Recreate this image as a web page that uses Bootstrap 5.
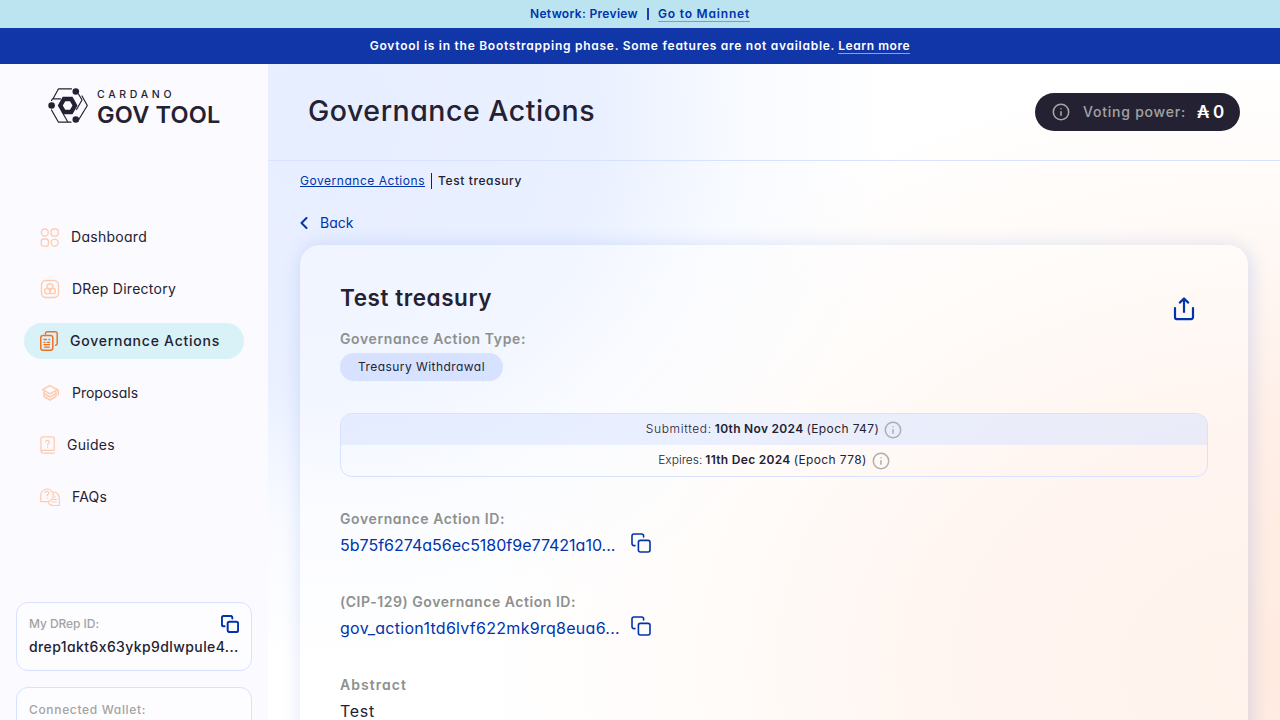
<!DOCTYPE html>
<html lang="en">
<head>
<meta charset="utf-8">
<meta name="viewport" content="width=device-width, initial-scale=1">
<title>GovTool</title>
<link href="https://cdn.jsdelivr.net/npm/bootstrap@5.3.0/dist/css/bootstrap.min.css" rel="stylesheet">
<style>
body{font-family:Inter,"Open Sans",sans-serif;font-feature-settings:"cv11";color:#242232;height:100vh;overflow:hidden;background:#fff;font-size:14px;line-height:20px}
a,.link-blue{color:#0033ad}
svg{flex:none;display:block;fill:none;stroke-linecap:round;stroke-linejoin:round}
span,a,h1,h2,b{white-space:nowrap}
.fw-sb{font-weight:600}.fw-md{font-weight:500}
.bar-network{height:28px;background:#bbe3f0;color:#0033ad;font-size:12px}
.bar-phase{height:36px;background:#1136a7;color:#fff;font-size:12px}
.bar-network a,.bar-phase a{text-decoration:none;line-height:14px;margin-top:1px}
.bar-network span{letter-spacing:.326px}
.bar-network a{border-bottom:1px solid #7c9bd2;letter-spacing:.809px}
.bar-phase span{letter-spacing:.735px;margin-right:3px}
.bar-phase a{color:#fff;border-bottom:1px solid #8ea2d8;letter-spacing:.567px}
.bar-sep{width:2px;height:12px;background:#1640b0;margin:0 9px}
.app{height:656px}
.side{width:268px;background:#fbfaff;flex:none;overflow:hidden}
.brand{padding:23px 0 0 48px;height:155px;flex:none}
.brand-text{padding-left:9px}
.brand-sub{font-size:10.5px;line-height:14px;padding-top:1px;letter-spacing:3.7px}
.brand-name{font-size:23.5px;line-height:25px;letter-spacing:.2px}
.side-nav{padding:0 24px;gap:16px;flex:none}
.side-nav .nav-link{height:36px;padding:0 0 0 16px;border-radius:18px;color:#242232;gap:12px}
.side-nav svg{stroke:#ffcbad}
.side-nav .active{background:#d8f2f7}
.side-nav .active svg{stroke:#f26f21}
.ls-dash{letter-spacing:.278px}.ls-dir{letter-spacing:.252px}.ls-gov{letter-spacing:.756px}.ls-guide{letter-spacing:.292px}.ls-faq{letter-spacing:.18px}
.wallets{margin:87px 16px 0;gap:16px;flex:none}
.wallet{border:1px solid #d6e2ff;border-radius:12px;background:#fdfdff;height:69px;padding:11px 12px}
.wallet .title{font-size:12px;color:#a3a3a4}
.wallet .value{margin-top:3px;letter-spacing:.4px}
.ls-drep{letter-spacing:-.058px}.ls-conn{letter-spacing:.661px}
.main{background:radial-gradient(ellipse 560px 540px at 60px 60px,rgba(231,238,255,1) 0,rgba(232,239,255,.95) 48%,rgba(240,245,255,.5) 72%,rgba(255,255,255,0) 100%),radial-gradient(ellipse 800px 600px at 1012px 600px,#ffebe0 0,#ffefe7 40%,rgba(255,249,245,.8) 75%,rgba(255,255,255,0) 100%),#fff}
.top{height:97px;border-bottom:1px solid #d6e2ff;padding:0 40px}
.top h1{font-size:28.5px;line-height:36px;margin:0 0 3px;letter-spacing:.52px}
.power{width:205px;height:38px;border-radius:19px;background:#242232;padding:0 17px}
.power .title{color:#a3a3a4;margin-left:13px;letter-spacing:.778px}
.power .value{margin-left:11px;font-size:17px;letter-spacing:-.29px}
.crumbs{padding:10px 32px 0;font-size:12px;height:52px}
.crumbs a{letter-spacing:.53px}.crumbs span{letter-spacing:.609px}
.crumb-sep{width:1px;height:16px;background:#242232;margin:2px 6px 0}
.back{padding:0 32px;height:32px;gap:12px}
.detail{margin:0 32px;height:560px;border-radius:20px;background:rgba(255,255,255,.38);box-shadow:2px 2px 20px rgba(47,98,220,.2);border:0;padding:39px 40px 0}
.detail-head{height:45px}
.detail-title{font-size:22.5px;line-height:28px;margin:0;letter-spacing:.56px}
.share{margin:11px 12px 0 0}
.field-label{color:#8e908e;font-weight:600;align-self:flex-start}
.ls-type{letter-spacing:.611px}.ls-id{letter-spacing:.604px}.ls-cip{letter-spacing:.541px}.ls-abs{letter-spacing:1.045px}
.chip{height:28px;width:163px;border-radius:14px;background:#d6e2ff;font-size:12px;letter-spacing:.442px;margin-top:4px}
.dates{border:1px solid #d6e2ff;border-radius:12px;font-size:12px;height:64px;overflow:hidden;margin:32px 0}
.dates>div{height:31px;gap:3px}
.dates .submitted{background:rgba(214,226,255,.5)}
.dates span,.dates b{margin-bottom:1px}
.dates svg{margin:1px 0 0 2px;stroke:#acadae}
.dates .submitted .fw-light{letter-spacing:.65px}
.dates b{letter-spacing:.3px}.ls-epoch{letter-spacing:.39px}
.id-row{margin:4px 0 35px;height:24px;font-size:16px;line-height:24px}
.id-text{width:291px}
.ls-cipid{letter-spacing:.284px}.ls-test{letter-spacing:.727px}
</style>
</head>
<body>
<svg width="0" height="0" class="position-absolute"><defs>
<symbol id="copy" viewBox="0 0 20 20"><rect x="7.400" y="7.400" width="11.600" height="11.600" rx="2"/><path d="M4 12.600H3A2 2 0 0 1 1 10.600V3A2 2 0 0 1 3 1H10.600A2 2 0 0 1 12.600 3V4"/></symbol>
<symbol id="info" viewBox="0 0 18 18"><circle cx="9" cy="9" r="7.700"/><path d="M9 8.700V12.300M9 5.700V5.800"/></symbol>
</defs></svg>
<div class="bar-network d-flex justify-content-center align-items-center fw-sb"><span>Network: Preview</span><i class="bar-sep"></i><a href="#">Go to Mainnet</a></div>
<div class="bar-phase d-flex justify-content-center align-items-center fw-sb"><span>Govtool is in the Bootstrapping phase. Some features are not available.</span><a href="#">Learn more</a></div>
<div class="app d-flex">
<aside class="side d-flex flex-column">
 <div class="brand d-flex">
  <svg width="40" height="37" viewBox="0 0 40 37" stroke="#242232" stroke-width="1.2" stroke-linecap="butt"><path d="M23.500 1.800H10.500L5.200 11.500M3.500 13.500L4.500 11.800H12.500M3.500 23L10.500 35.200H23M15.500 27.500L20 35.200M30.500 7L34 13L28.500 22.500M34 9L39.300 18.500L30.500 33"/><path d="M14.700 9.700H24.500L29.500 18.500L24.500 27.300H14.700L9.800 18.500Z" fill="#242232" stroke="none"/><path d="M17.300 14.200H22L24.500 18.500L22 22.800H17.300L14.800 18.500Z" fill="#fbfaff" stroke="none"/><g fill="#242232" stroke="none"><circle cx="27.800" cy="4.500" r="3.300"/><circle cx="3.600" cy="18.500" r="3.300"/><circle cx="27.800" cy="32.500" r="3.300"/></g></svg>
  <div class="brand-text d-flex flex-column"><span class="brand-sub fw-md">CARDANO</span><span class="brand-name fw-sb">GOV TOOL</span></div>
 </div>
 <nav class="side-nav nav flex-column">
  <a class="nav-link d-flex align-items-center" href="#"><svg width="19" height="19" viewBox="0 0 19 19" stroke-width="1.3"><circle cx="4.800" cy="4.500" r="3.500"/><rect x="11" y="1" width="7.200" height="7.200" rx="2.600"/><rect x="1.200" y="11" width="7.200" height="7.200" rx="2.300"/><circle cx="14.600" cy="14.600" r="3.500"/></svg><span class="ls-dash">Dashboard</span></a>
  <a class="nav-link d-flex align-items-center" href="#"><svg width="20" height="20" viewBox="0 0 20 20" stroke-width="1.400"><rect x="1.500" y="1.500" width="17" height="17" rx="4.500"/><circle cx="10" cy="7.600" r="2.900"/><circle cx="7.500" cy="12" r="2.900"/><circle cx="12.500" cy="12" r="2.900"/></svg><span class="ls-dir">DRep Directory</span></a>
  <a class="nav-link active d-flex align-items-center" href="#"><svg width="18" height="20" viewBox="0 0 18 20" stroke-width="1.500"><path d="M5.500 3V2.500A1.700 1.700 0 0 1 7.200.8H15.500A1.700 1.700 0 0 1 17.200 2.500V12.500A1.800 1.800 0 0 1 15.500 14.300"/><rect x=".8" y="4.600" width="12" height="14.600" rx="2.200"/><path d="M4 8.500H6.500M9 8.500H9.600M4 11.300H5M7.300 11.300H9.600M4 13.700H9.600M4.500 16.200H9.300" stroke-width="1.300"/></svg><span class="fw-md ls-gov">Governance Actions</span></a>
  <a class="nav-link d-flex align-items-center" href="#"><svg width="20" height="20" viewBox="0 0 20 20" stroke-width="1.500"><path d="M10 2.700L17.500 6.700L10 10.800L2.500 6.700ZM15 5.500L18.300 7.200V12M4 9V13.500L10 17L16 13.500V9M4 10.500L10 14L16 10.500"/></svg><span>Proposals</span></a>
  <a class="nav-link d-flex align-items-center" href="#"><svg width="15" height="18" viewBox="0 0 15 18" stroke-width="1.300"><path d="M14 14.300H2.500A1.500 1.500 0 0 0 2.500 17.200H14M1 15.500V3A2 2 0 0 1 3 .8H12.500A1.600 1.600 0 0 1 14.200 2.500V14.300M5.800 5.700C6 3.800 9.500 3.900 9.400 6C9.300 7.200 7.600 7.300 7.600 9M7.600 11.200V11.300"/></svg><span class="ls-guide">Guides</span></a>
  <a class="nav-link d-flex align-items-center" href="#"><svg width="20" height="20" viewBox="0 0 20 20" stroke-width="1.200"><path d="M.8 14.600V7.500A6.300 6.300 0 1 1 7.100 14.600ZM13.500 5C17 5 19.300 8 19.300 11.500V18.500H13.500C10.500 18.500 8.500 17 8 14.700M5 5.500C5.200 3.600 8.800 3.700 8.800 5.900C8.800 7.200 7 7.300 7 9M7 11.300V11.400M14.500 10H15.500M13 12.500H16.500M12 15H16.500"/></svg><span class="ls-faq">FAQs</span></a>
 </nav>
 <div class="wallets d-flex flex-column">
  <div class="wallet"><div class="d-flex justify-content-between"><span class="title fw-md ls-drep">My DRep ID:</span><svg width="18" height="18" viewBox="0 0 20 20" stroke="#0033ad" stroke-width="2.200" overflow="visible" style="margin-top:1px"><use href="#copy"/></svg></div><span class="value fw-md d-block">drep1akt6x63ykp9dlwpule4...</span></div>
  <div class="wallet"><span class="title fw-md ls-conn">Connected Wallet:</span></div>
 </div>
</aside>
<main class="main flex-grow-1">
 <header class="top d-flex justify-content-between align-items-center"><h1>Governance Actions</h1>
  <div class="power d-flex align-items-center"><svg width="18" height="18" stroke="#a5a5a6" stroke-width="1.600"><use href="#info"/></svg><span class="title fw-md">Voting power:</span><span class="value text-white fw-sb">₳ 0</span></div></header>
 <div class="crumbs d-flex"><a href="#">Governance Actions</a><i class="crumb-sep"></i><span class="fw-md">Test treasury</span></div>
 <div class="back d-flex align-items-start link-blue"><svg class="mt-1" width="8" height="12" viewBox="0 0 8 12" stroke="#0033ad" stroke-width="2"><path d="M6.500 1L1.500 6L6.500 11"/></svg><span>Back</span></div>
 <section class="detail card">
  <div class="detail-head d-flex justify-content-between"><h2 class="detail-title fw-sb">Test treasury</h2><svg class="share" width="24" height="28" viewBox="0 0 24 28" stroke="#0033ad" stroke-width="2.200"><path d="M3 13V22.300A1.800 1.800 0 0 0 4.800 24.100H19.200A1.800 1.800 0 0 0 21 22.300V13M12 17V3.800M7.800 7.600L12 3.500L16.200 7.600"/></svg></div>
  <span class="field-label ls-type">Governance Action Type:</span>
  <div class="chip d-flex align-items-center justify-content-center"><span>Treasury Withdrawal</span></div>
  <div class="dates">
   <div class="submitted d-flex justify-content-center align-items-center"><span class="fw-light">Submitted:</span><b class="fw-sb">10th Nov 2024</b><span class="ls-epoch">(Epoch 747)</span><svg width="18" height="18" stroke-width="1.500"><use href="#info"/></svg></div>
   <div class="d-flex justify-content-center align-items-center"><span class="fw-light">Expires:</span><b class="fw-sb">11th Dec 2024</b><span class="ls-epoch">(Epoch 778)</span><svg width="18" height="18" stroke-width="1.500"><use href="#info"/></svg></div>
  </div>
  <span class="field-label ls-id">Governance Action ID:</span>
  <div class="id-row d-flex link-blue"><span class="id-text">5b75f6274a56ec5180f9e77421a10...</span><svg width="20" height="20" stroke="#0033ad" stroke-width="1.600"><use href="#copy"/></svg></div>
  <span class="field-label ls-cip">(CIP-129) Governance Action ID:</span>
  <div class="id-row d-flex link-blue"><span class="id-text ls-cipid">gov_action1td6lvf622mk9rq8eua6...</span><svg width="20" height="20" stroke="#0033ad" stroke-width="1.600"><use href="#copy"/></svg></div>
  <span class="field-label ls-abs">Abstract</span>
  <div class="id-row d-flex"><span class="ls-test">Test</span></div>
 </section>
</main>
</div>
<script src="https://cdn.jsdelivr.net/npm/bootstrap@5.3.0/dist/js/bootstrap.bundle.min.js"></script>
</body>
</html>
